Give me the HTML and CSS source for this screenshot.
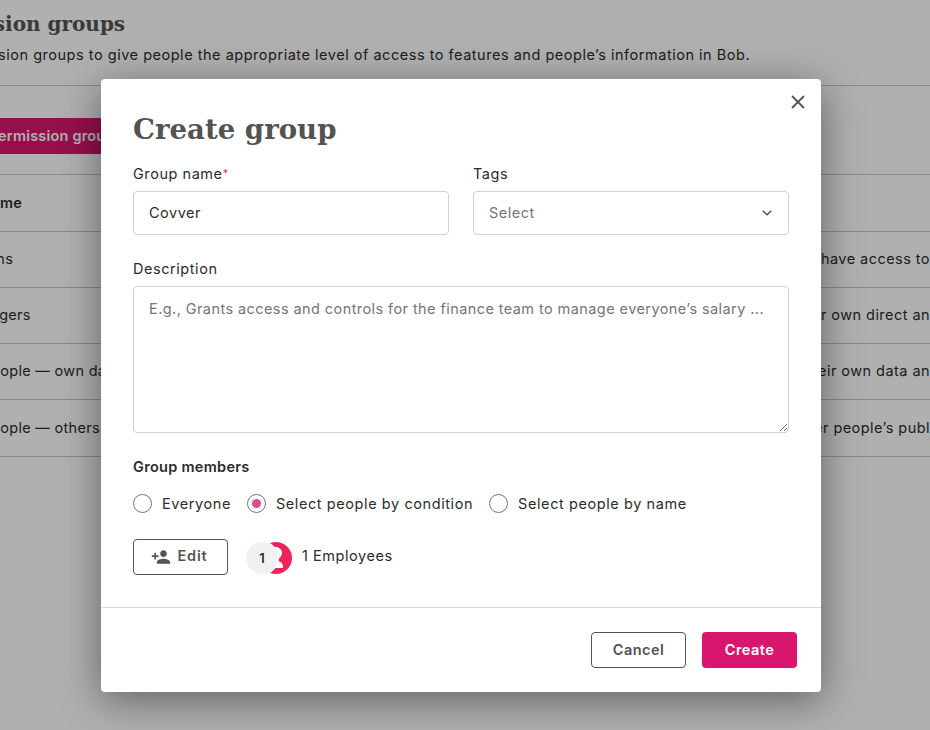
FILE: index.html
```html
<!DOCTYPE html>
<html lang="en">
<head>
<meta charset="utf-8">
<title>Create group</title>
<link rel="stylesheet" href="styles.css">
</head>
<body>
<main class="page">
  <h1 class="page-title">Permission groups</h1>
  <p class="page-intro">Use permission groups to give people the appropriate level of access to features and people’s information in Bob.</p>
  <div class="toolbar"><button class="page-btn" type="button">Create permission group</button></div>
  <div class="table">
    <div class="row row-head"><span class="cell-name">Name</span><span class="cell-desc"></span></div>
    <div class="row"><span class="cell-name">Admins</span><span class="cell-desc">People in this group have access to</span></div>
    <div class="row"><span class="cell-name">Managers</span><span class="cell-desc">Managers can see their own direct an</span></div>
    <div class="row"><span class="cell-name">All people — own data</span><span class="cell-desc">People can see their own data an</span></div>
    <div class="row row-last"><span class="cell-name">All people — others</span><span class="cell-desc">People can see other people’s publ</span></div>
  </div>
</main>
<div class="overlay"></div>
<section class="modal" role="dialog" aria-label="Create group">
  <button class="close" type="button" aria-label="Close">
    <svg width="14" height="14" viewBox="0 0 14 14"><path d="M1 1l12 12M13 1L1 13" stroke="#535353" stroke-width="1.8" fill="none"/></svg>
  </button>
  <div class="modal-body">
    <h2 class="modal-title">Create group</h2>
    <div class="two-col">
      <label class="field">
        <span class="label">Group name<span class="req">*</span></span>
        <input class="input" type="text" value="Covver">
      </label>
      <div class="field">
        <span class="label">Tags</span>
        <div class="select"><span>Select</span>
          <svg width="10" height="6" viewBox="0 0 10 6"><path d="M.8.8L5 4.8 9.2.8" stroke="#535353" stroke-width="1.5" fill="none"/></svg>
        </div>
      </div>
    </div>
    <label class="field field-desc">
      <span class="label">Description</span>
      <textarea class="textarea" placeholder="E.g., Grants access and controls for the finance team to manage everyone’s salary ..."></textarea>
    </label>
    <div class="members-title">Group members</div>
    <div class="radios">
      <span class="radio-item"><span class="radio"></span>Everyone</span>
      <span class="radio-item"><span class="radio radio-on"></span>Select people by condition</span>
      <span class="radio-item"><span class="radio"></span>Select people by name</span>
    </div>
    <div class="members-row">
      <button class="btn btn-edit" type="button">
        <svg width="20" height="20" viewBox="0 0 24 24"><path fill="#535353" d="M15 12c2.21 0 4-1.79 4-4s-1.79-4-4-4-4 1.79-4 4 1.79 4 4 4zm-9-2V7H4v3H1v2h3v3h2v-3h3v-2H6zm9 4c-2.67 0-8 1.34-8 4v2h16v-2c0-2.66-5.33-4-8-4z"/></svg>
        Edit
      </button>
      <div class="avatars">
        <svg class="avatar-photo" width="32" height="32" viewBox="0 0 32 32">
          <circle cx="16" cy="16" r="16" fill="#f02358"/>
          <circle cx="16" cy="11" r="6" fill="#fff"/>
          <path d="M6 26c0-4 5-7 10-7s7 2 7 7z" fill="#fff"/>
        </svg>
        <span class="avatar-count">1</span>
      </div>
      <span class="count-label">1 Employees</span>
    </div>
  </div>
  <footer class="modal-footer">
    <button class="btn btn-cancel" type="button">Cancel</button>
    <button class="btn btn-create" type="button">Create</button>
  </footer>
</section>
</body>
</html>
```
FILE: styles.css
```css
* { box-sizing: border-box; }
html, body { margin: 0; height: 730px; overflow: hidden; background: #fff; }
body { font-family: Inter, "Noto Sans", sans-serif; font-size: 14.5px; color: #2c2c2c; position: relative; }

.page { margin-left: -40px; width: 1036px; padding-top: 10px; color: #2c2c2c; }
.page-title { margin: 0 0 0 -44px; font-family: "DejaVu Serif", serif; font-weight: 700; font-size: 20px; line-height: 28px; color: #535353; }
.page-intro { margin: 7px 0 0; padding-left: 0; line-height: 20px; letter-spacing: .52px; height: 41px; border-bottom: 1px solid #c9c9c9; text-indent: -45px; white-space: nowrap; }
.toolbar { padding: 32px 0 20px; border-bottom: 1px solid #c9c9c9; height: 89px; }
.page-btn { height: 36px; width: 260px; border: 0; border-radius: 4px; padding: 0 0 2px; background: #d9166e; color: #fff; font: 600 14.5px Inter, sans-serif; letter-spacing: .2px; text-align: left; text-indent: -23px; }
.row { display: flex; justify-content: space-between; align-items: center; height: 56px; padding-bottom: 2px; border-bottom: 1px solid #c9c9c9; letter-spacing: .45px; white-space: nowrap; }
.row-head { height: 57px; font-weight: 600; }
.row-head .cell-name { padding-left: 20px; }
.row-last { height: 57px; }
.cell-name { letter-spacing: .3px; }
.cell-desc { text-align: right; padding-right: 66px; }

.overlay { position: absolute; inset: 0; background: rgba(0,0,0,.31); }
.modal { position: absolute; left: 101px; top: 79px; width: 720px; height: 613px; background: #fff; border-radius: 4px; box-shadow: 0 8px 40px rgba(0,0,0,.45); display: flex; flex-direction: column; }
.close { position: absolute; top: 16px; right: 16px; width: 14px; height: 14px; padding: 0; border: 0; background: none; display: flex; }
.modal-body { flex: 1; padding: 31px 32px 0; border-bottom: 1px solid #d9d9d9; }
.modal-title { margin: 0; font-family: "DejaVu Serif", serif; font-weight: 700; font-size: 27.6px; line-height: 40px; color: #535353; }
.two-col { display: grid; grid-template-columns: 316px 316px; gap: 24px; margin-top: 14px; }
.field { display: flex; flex-direction: column; }
.label { line-height: 20px; letter-spacing: .55px; margin-bottom: 7px; }
.req { color: #e8336e; font-size: 11px; line-height: 0; vertical-align: 2px; }
.input, .select { height: 44px; border: 1px solid #d1d1d1; border-radius: 4px; padding: 0 15px; font: 14.5px Inter, sans-serif; letter-spacing: .5px; color: #2c2c2c; background: #fff; }
.input { padding-bottom: 2px; }
.select { display: flex; justify-content: space-between; align-items: center; color: #757575; padding-right: 16px; }
.select span { margin-bottom: 2px; }
.field-desc { margin-top: 24px; }
.textarea { display: block; width: 656px; height: 147px; border: 1px solid #d1d1d1; border-radius: 4px; padding: 12px 15px; font: 14.5px/20px Inter, sans-serif; letter-spacing: .42px; color: #2c2c2c; resize: vertical; outline: 0; }
.textarea::placeholder { color: #757575; opacity: 1; }
.members-title { margin-top: 24px; font-weight: 600; line-height: 20px; letter-spacing: .3px; }
.radios { display: flex; gap: 16px; margin-top: 16px; height: 20px; align-items: center; letter-spacing: .58px; }
.radio-item { display: flex; align-items: center; gap: 10px; }
.radio { width: 19px; height: 19px; border: 1px solid #757575; border-radius: 50%; background: #fff; display: flex; align-items: center; justify-content: center; }
.radio-on::after { content: ""; width: 9px; height: 9px; border-radius: 50%; background: #d64e8e; }
.members-row { display: flex; align-items: center; margin-top: 26px; }
.btn { height: 36px; width: 95px; border-radius: 4px; padding: 0 0 1px; font: 600 14.5px Inter, sans-serif; letter-spacing: .45px; display: flex; align-items: center; justify-content: center; }
.btn-edit, .btn-cancel { background: #fff; border: 1px solid #535353; color: #535353; }
.btn-edit { gap: 7px; padding: 0 3px 3px 0; letter-spacing: .8px; }
.btn-edit svg { margin-top: 2px; }
.avatars { position: relative; width: 46px; height: 32px; margin-left: 18px; }
.avatar-photo { position: absolute; left: 14px; top: 1px; }
.avatar-count { position: absolute; left: -1px; top: 0; width: 34px; height: 34px; border-radius: 50%; background: #f1f1f1; border: 1px solid #fff; display: flex; align-items: center; justify-content: center; font-weight: 600; font-size: 13px; }
.count-label { margin-left: 10px; padding-bottom: 3px; letter-spacing: .55px; }
.modal-footer { height: 84px; display: flex; justify-content: flex-end; align-items: center; gap: 16px; padding: 0 24px; }
.btn-create { background: #d9166e; border: 0; color: #fff; }
```
